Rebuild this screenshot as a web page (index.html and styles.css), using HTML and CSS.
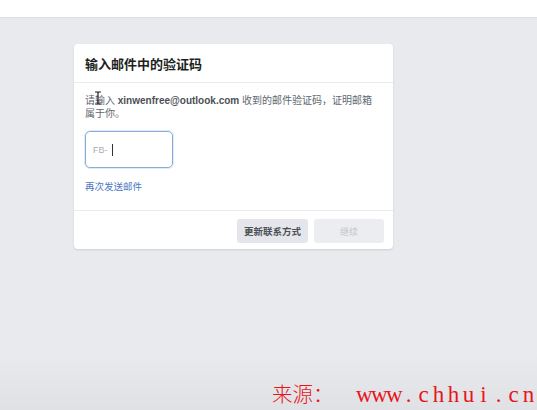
FILE: index.html
```html
<!DOCTYPE html>
<html lang="zh-CN">
<head>
<meta charset="utf-8">
<link rel="stylesheet" href="styles.css">
</head>
<body>
<div class="topbar"></div>
<main class="stage">
  <section class="card">
    <header class="card-head">输入邮件中的验证码</header>
    <div class="card-body">
      <p class="desc">请输入 <b class="email">xinwenfree@outlook.com</b> 收到的邮件验证码，证明邮箱<br>属于你。</p>
      <div class="code-input"><span class="ph">FB-</span><span class="caret"></span></div>
      <a class="resend">再次发送邮件</a>
    </div>
    <footer class="card-foot">
      <button class="btn">更新联系方式</button>
      <button class="btn btn-disabled">继续</button>
    </footer>
  </section>
</main>
<svg class="ibeam" width="8" height="14" viewBox="0 0 8 14"><path d="M1 1h2.5l.5.6.5-.6H7M4 1.6v10.8M1 13h2.5l.5-.6.5.6H7" fill="none" stroke="#222" stroke-width="1.2"/></svg>
<div class="watermark"><span class="wm-cjk">来源：</span><span class="wm-lat"><span class="ch">w</span><span class="ch">w</span><span class="ch">w</span><span class="ch">.</span><span class="ch">c</span><span class="ch">h</span><span class="ch">h</span><span class="ch">u</span><span class="ch">i</span><span class="ch">.</span><span class="ch">c</span><span class="ch">n</span></span></div>
</body>
</html>
```

FILE: styles.css
```css
* { box-sizing: border-box; }
html, body { height: 100%; }
body {
  margin: 0;
  background: linear-gradient(to bottom, #e9eaed 0, #e9eaed 355px, #e0e1e4 410px);
  font-family: "Liberation Sans", "Noto Sans CJK SC", sans-serif;
  overflow: hidden;
  position: relative;
}
.topbar {
  height: 18px;
  background: #ffffff;
  border-bottom: 1px solid #dcdee2;
}
.stage {
  padding: 26px 0 0 74px;
}
.card {
  width: 319px;
  background: #fff;
  border-radius: 4px;
  box-shadow: 0 1px 2px rgba(0,0,0,0.12);
}
.card-head {
  height: 39px;
  display: flex;
  align-items: center;
  padding: 1px 11px 0;
  font-size: 13px;
  font-weight: bold;
  color: #1c1e21;
  border-bottom: 1px solid #e9ebee;
}
.card-body {
  padding: 11px 11px 17px;
}
.desc {
  margin: 0;
  font-size: 10px;
  line-height: 13px;
  color: #606770;
  white-space: nowrap;
}
.email {
  color: #4b4f56;
  font-weight: bold;
}
.code-input {
  margin-top: 11px;
  width: 88px;
  height: 37px;
  border: 1.5px solid #86acd9;
  border-radius: 5px;
  box-shadow: 0 0 0 1px rgba(134,172,217,0.25);
  display: flex;
  align-items: center;
  padding-left: 7px;
}
.ph {
  font-size: 9px;
  color: #a8adb5;
}
.caret {
  width: 1px;
  height: 12px;
  background: #333;
  margin-left: 4px;
}
.resend {
  display: block;
  margin-top: 13px;
  font-size: 9.5px;
  color: #4a77c0;
  line-height: 12px;
}
.card-foot {
  border-top: 1px solid #e9ebee;
  display: flex;
  justify-content: flex-end;
  gap: 6px;
  padding: 8px 9px 6px;
}
.btn {
  font-family: inherit;
  border: 0;
  border-radius: 3px;
  height: 24px;
  width: 71px;
  background: #e4e6eb;
  color: #4b4f56;
  font-size: 9.5px;
  font-weight: bold;
  padding: 0;
}
.btn-disabled {
  width: 70px;
  background: #ebedf0;
  color: #c2c6cc;
  font-weight: normal;
  font-size: 9px;
}
.ibeam {
  position: absolute;
  left: 94px;
  top: 91px;
}
.watermark {
  position: absolute;
  left: 272px;
  top: 378px;
  color: #e8141c;
  white-space: nowrap;
  display: flex;
  align-items: baseline;
}
.wm-cjk {
  font-family: "Noto Sans CJK SC", sans-serif;
  font-weight: 300;
  font-size: 20.5px;
  width: 84px;
}
.wm-lat {
  font-family: "Liberation Serif", serif;
  font-size: 23px;
}
.ch {
  display: inline-block;
  width: 15px;
  text-align: center;
}
```
